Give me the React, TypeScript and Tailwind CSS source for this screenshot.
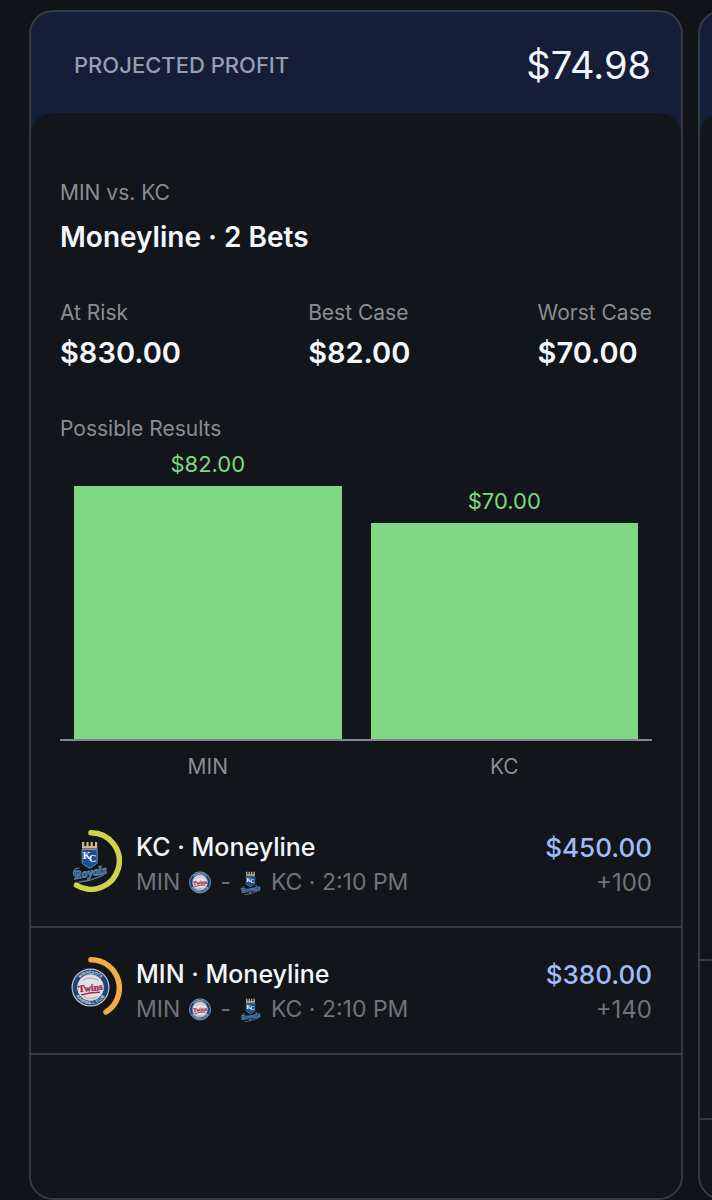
import React from 'react';

type Team = 'MIN' | 'KC';

const stats = [
  { label: 'At Risk', value: '$830.00' },
  { label: 'Best Case', value: '$82.00' },
  { label: 'Worst Case', value: '$70.00' },
];

const results = [
  { team: 'MIN', amount: 82 },
  { team: 'KC', amount: 70 },
];

const bets: { team: Team; amount: string; odds: string; arc: string; color: string }[] = [
  {
    team: 'KC',
    amount: '$450.00',
    odds: '+100',
    arc: 'M31 2.75A28.25 28.25 0 1 1 16.5 55.2',
    color: '#cfd24c',
  },
  {
    team: 'MIN',
    amount: '$380.00',
    odds: '+140',
    arc: 'M31 2.75A28.25 28.25 0 0 1 46 55',
    color: '#f2ae40',
  },
];

const maxResult = Math.max(...results.map((r) => r.amount));

const RoyalsMark = () => (
  <>
    {/* Crown */}
    <path
      d="M11.5 1.5h2.2v4h2.2v-4h2.2v4h2v-4h2.2v4h2.2v-4h2.2V9H11.5z"
      fill="#cdb88a"
    />
    <path d="M11.5 7.5h15.2V9H11.5z" fill="#857350" />
    {/* Shield */}
    <path
      d="M11.5 9h15.2v12.5c0 1.2-.6 2-1.7 2.6l-5.9 3.7-5.9-3.7c-1.1-.6-1.7-1.4-1.7-2.6z"
      fill="#1b4f92"
      stroke="#8fa9c9"
      strokeWidth="0.7"
    />
    <text x="12.3" y="18.5" fill="#ffffff" fontFamily="Liberation Serif, serif" fontWeight="700" fontSize="10">
      K<tspan dx="-1.5" dy="3">C</tspan>
    </text>
    {/* Wordmark */}
    <g transform="rotate(-10 19 34)">
      <text
        x="20"
        y="36"
        textAnchor="middle"
        fill="#1b3f70"
        stroke="#5f86b6"
        strokeWidth="0.9"
        fontFamily="Liberation Serif, serif"
        fontStyle="italic"
        fontWeight="700"
        fontSize="12"
      >
        Royals
      </text>
      <path d="M4 33c-2-5 2-8 6-7M7 39.5c8 1 18-.4 26-2.6" fill="none" stroke="#4c76a8" strokeWidth="1.4" />
    </g>
  </>
);

const TwinsMark = ({ id }: { id: string }) => (
  <>
    <circle cx="20" cy="20" r="18.4" fill="#1f4372" stroke="#b6c5d6" strokeWidth="1.2" />
    <circle cx="20" cy="20" r="13" fill="#dfe1e8" stroke="#c9d3df" strokeWidth="0.8" />
    <path d="M12 13.5c3.5-4 12.5-4 16 0M13 28.5c3 3 11 3 14 0" fill="none" stroke="#cf8792" strokeWidth="0.9" />
    <path id={`${id}-top`} d="M6 20a14 14 0 0 1 28 0" fill="none" />
    <path id={`${id}-bottom`} d="M3.4 20a16.6 16.6 0 0 0 33.2 0" fill="none" />
    <g fill="#dbe3ed" fontFamily="Liberation Sans, sans-serif" fontWeight="700" fontSize="4" textAnchor="middle">
      <text>
        <textPath href={`#${id}-top`} startOffset="50%">MINNESOTA</textPath>
      </text>
      <text>
        <textPath href={`#${id}-bottom`} startOffset="50%">BASEBALL CLUB</textPath>
      </text>
    </g>
    <g transform="rotate(-6 20 20)">
      <text
        x="20"
        y="23.5"
        textAnchor="middle"
        fill="#b32541"
        stroke="#9b2846"
        strokeWidth="0.4"
        fontFamily="Liberation Serif, serif"
        fontWeight="700"
        fontSize="9.5"
      >
        Twins
      </text>
      <path d="M10 26.5c7-1.6 13-1.6 19-.8" fill="none" stroke="#a82b48" strokeWidth="1.5" />
    </g>
  </>
);

const TeamLogo = ({ team, id }: { team: Team; id: string }) => (
  <svg viewBox="0 0 40 42" className="size-6 shrink-0" aria-hidden="true">
    {team === 'KC' ? <RoyalsMark /> : <TwinsMark id={id} />}
  </svg>
);

const BetRing = ({ team, arc, color }: { team: Team; arc: string; color: string }) => (
  <svg viewBox="0 0 62 62" className="size-[62px] shrink-0" aria-hidden="true">
    <path d={arc} fill="none" stroke={color} strokeWidth="5.5" strokeLinecap="round" />
    <g transform="translate(10.5 10.5)">{team === 'KC' ? <RoyalsMark /> : <TwinsMark id={`ring-${team}`} />}</g>
  </svg>
);

const ProfitCard = () => {
  return (
    <section className="flex w-full shrink-0 flex-col overflow-hidden rounded-3xl border-2 border-[#36393d] bg-[#141f37]">
      <header className="flex h-[101px] items-center justify-between pt-[5px] pr-[30px] pl-[43px]">
        <h1 className="text-[22px] font-medium text-[#969eb0]">PROJECTED PROFIT</h1>
        <span className="text-[38px] text-[#f3f6ff]">$74.98</span>
      </header>

      <div className="flex-1 rounded-t-[22px] bg-[#12161a] pt-16">
        <div className="px-[29px]">
          <p className="text-[21px] leading-8 text-[#8b8d91]">MIN vs. KC</p>
          <h2 className="mt-2 text-[28px] leading-10 font-semibold text-[#f5f6fa]">Moneyline · 2 Bets</h2>

          <dl className="mt-10 flex justify-between">
            {stats.map((stat) => (
              <div key={stat.label}>
                <dt className="text-[21px] leading-8 text-[#8b8d91]">{stat.label}</dt>
                <dd className="mt-1 text-[29px] leading-10 font-semibold text-[#f5f6fa]">{stat.value}</dd>
              </div>
            ))}
          </dl>

          <h3 className="mt-10 text-[21px] leading-8 text-[#8b8d91]">Possible Results</h3>
          <div className="flex h-[296px] gap-[29px] border-b-2 border-[#81858d] px-[14px] pt-[41px]">
            {results.map((result) => (
              <div key={result.team} className="flex flex-1 flex-col justify-end">
                <div className="relative bg-[#7fd784]" style={{ height: `${(result.amount / maxResult) * 100}%` }}>
                  <span className="absolute inset-x-0 bottom-full text-center text-[22px] leading-[44px] text-[#7fd784]">
                    ${result.amount.toFixed(2)}
                  </span>
                </div>
              </div>
            ))}
          </div>
          <div className="flex gap-[29px] px-[14px] pt-[10px]">
            {results.map((result) => (
              <span key={result.team} className="flex-1 text-center text-[21px] leading-8 text-[#8b8d91]">
                {result.team}
              </span>
            ))}
          </div>
        </div>

        <ul className="mt-[18px]">
          {bets.map((bet) => (
            <li key={bet.team} className="flex border-b-2 border-[#36393d] px-[29px] pt-[29px] pb-[26px]">
              <BetRing team={bet.team} arc={bet.arc} color={bet.color} />
              <div className="ml-[14px] flex-1">
                <p className="text-[25px] leading-[35px] font-medium text-[#f5f6fa]">{bet.team} · Moneyline</p>
                <p className="flex items-center gap-2 text-[23px] leading-[35px] text-[#717377]">
                  MIN
                  <TeamLogo team="MIN" id={`game-${bet.team}`} />
                  <span>-</span>
                  <TeamLogo team="KC" id={`away-${bet.team}`} />
                  KC · 2:10 PM
                </p>
              </div>
              <div className="text-right">
                <p className="text-[26px] leading-[35px] font-medium text-[#a2bbfb]">{bet.amount}</p>
                <p className="text-2xl leading-[35px] text-[#717377]">{bet.odds}</p>
              </div>
            </li>
          ))}
        </ul>
      </div>
    </section>
  );
};

// Only the left edge of the following card shows in the carousel
const NextCard = () => (
  <section
    aria-hidden="true"
    className="flex w-full shrink-0 flex-col overflow-hidden rounded-3xl border-2 border-[#36393d] bg-[#141f37]"
  >
    <div className="h-[101px]" />
    <div className="flex flex-1 flex-col justify-end rounded-t-[22px] bg-[#12161a]">
      <div className="h-[161px] border-y-2 border-[#36393d]" />
      <div className="h-[78px]" />
    </div>
  </section>
);

const App = () => {
  return (
    <main className="flex min-h-screen overflow-hidden bg-[#101418] pt-[10px] pr-[29px] pl-[29px] font-['Inter',sans-serif]">
      <div className="flex w-full gap-[15px]">
        <ProfitCard />
        <NextCard />
      </div>
    </main>
  );
};

export default App;
